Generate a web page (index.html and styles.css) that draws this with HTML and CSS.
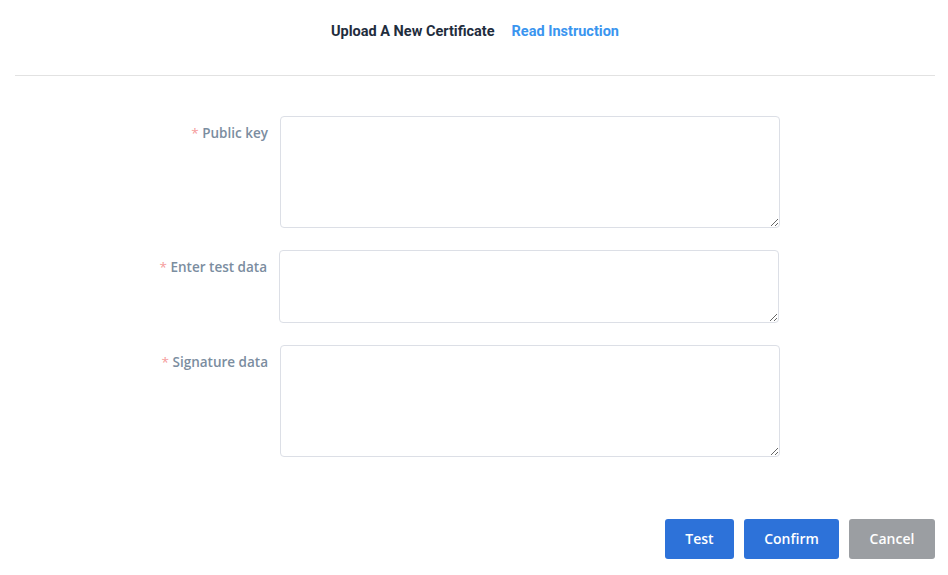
FILE: index.html
```html
<!DOCTYPE html>
<html>
<head>
<meta charset="utf-8">
<link rel="stylesheet" href="styles.css">
</head>
<body>
<div class="header">
  <span class="title">Upload A New Certificate</span>
  <a class="link">Read Instruction</a>
</div>
<form class="form">
  <div class="row">
    <label class="label"><span class="req">*</span> Public key</label>
    <textarea class="field tall"></textarea>
  </div>
  <div class="row">
    <label class="label shift"><span class="req">*</span> Enter test data</label>
    <textarea class="field short"></textarea>
  </div>
  <div class="row">
    <label class="label"><span class="req">*</span> Signature data</label>
    <textarea class="field tall"></textarea>
  </div>
  <div class="actions">
    <button type="button" class="btn primary test">Test</button>
    <button type="button" class="btn primary confirm">Confirm</button>
    <button type="button" class="btn muted cancel">Cancel</button>
  </div>
</form>
</body>
</html>
```
FILE: styles.css
```css
* { box-sizing: border-box; }
body {
  margin: 0;
  background: #fff;
  font-family: "Open Sans", "Liberation Sans", sans-serif;
}
.header {
  margin: 0 13px 0 15px;
  height: 76px;
  padding-top: 21px;
  border-bottom: 1px solid #e2e2e2;
  display: flex;
  justify-content: center;
  gap: 17px;
  font-family: Roboto, "Liberation Sans", sans-serif;
  font-size: 14.5px;
  font-weight: 700;
  line-height: 21px;
}
.title { color: #1f2d3d; }
.link { color: #3a95ef; cursor: pointer; }
.form {
  margin-top: 40px;
  display: flex;
  flex-direction: column;
  gap: 22px;
}
.row {
  display: flex;
  gap: 12px;
}
.label {
  width: 268px;
  text-align: right;
  padding-top: 7px;
  font-size: 13.5px;
  font-weight: 600;
  line-height: 20px;
  color: #7b8da0;
}
.label.shift { width: 267px; }
.req { color: #f59b9b; font-weight: 400; }
.field {
  width: 500px;
  border: 1px solid #dcdfe6;
  border-radius: 4px;
  font-family: inherit;
  font-size: 13px;
  padding: 5px 10px;
  resize: vertical;
  outline: none;
}
.tall { height: 112px; }
.short { height: 73px; }
.actions {
  margin-top: 40px;
  display: flex;
  justify-content: flex-end;
  gap: 10px;
  padding-right: 13px;
}
.btn {
  height: 40px;
  border: none;
  border-radius: 3px;
  color: #fff;
  font-family: "Open Sans", "Liberation Sans", sans-serif;
  font-size: 14px;
  font-weight: 600;
  line-height: 38px;
  padding: 0;
  cursor: pointer;
}
.primary { background: #2d72d9; }
.muted { background: #9b9ea2; }
.test { width: 69px; }
.confirm { width: 95px; }
.cancel { width: 86px; }
```
